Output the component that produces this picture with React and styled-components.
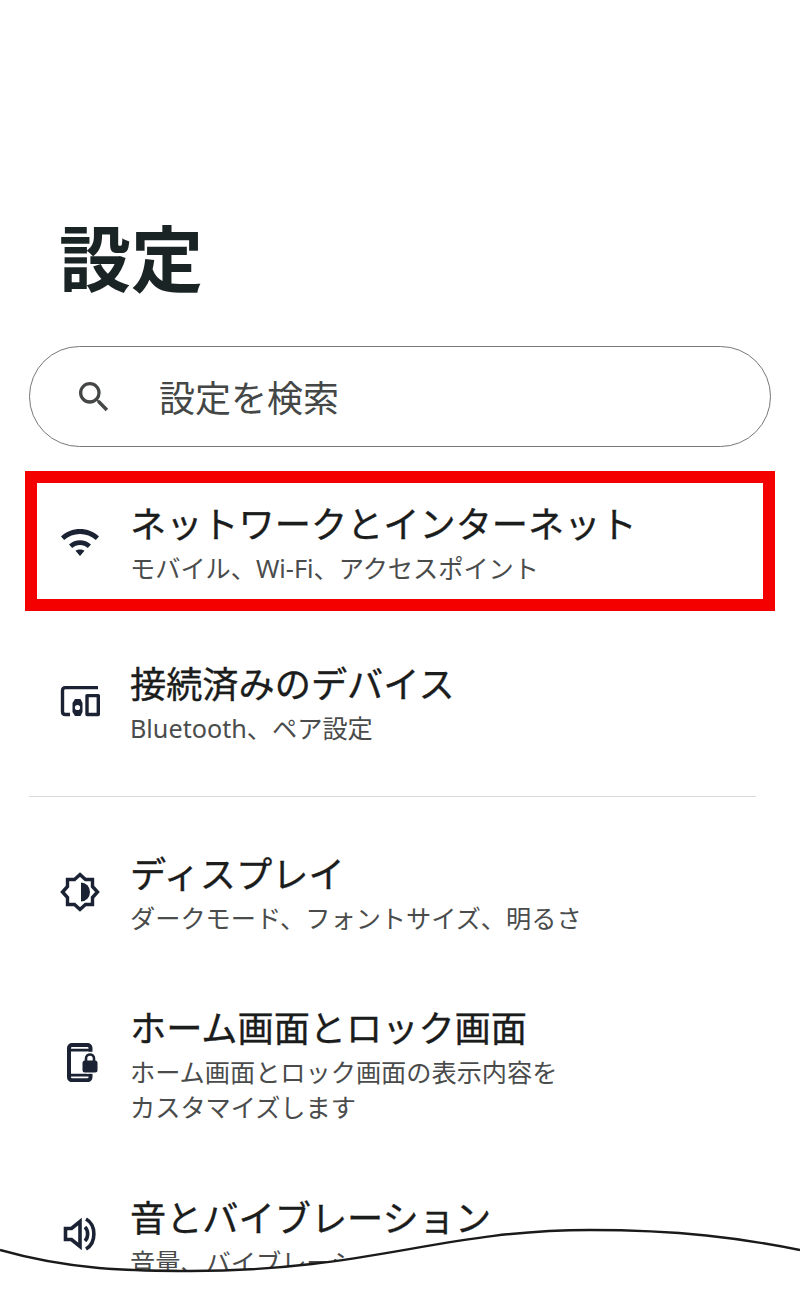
import React from "react";
import styled, { createGlobalStyle } from "styled-components";

const Global = createGlobalStyle`
  html, body { margin: 0; padding: 0; background: #fff; }
  body { width: 800px; height: 1300px; overflow: hidden; font-family: "Noto Sans", "Noto Sans CJK JP", sans-serif; }
`;

const Screen = styled.main`
  position: relative;
  width: 800px;
  height: 1300px;
  overflow: hidden;
  background: #fff;
  padding-top: 210px;
  box-sizing: border-box;
`;

const Title = styled.h1`
  margin: 0 0 0 59px;
  font-size: 72px;
  line-height: 90px;
  font-weight: 700;
  color: #1b2424;
  font-family: "Noto Sans CJK JP", sans-serif;
`;

const Search = styled.div`
  display: flex;
  align-items: center;
  box-sizing: border-box;
  width: 742px;
  height: 101px;
  margin: 46px 0 24px 29px;
  padding-left: 44px;
  border: 1.5px solid #777;
  border-radius: 51px;
`;

const SearchText = styled.span`
  margin: -2px 0 0 45px;
  font-size: 36px;
  line-height: 50px;
  color: #444746;
  font-family: "Noto Sans CJK JP", sans-serif;
`;

const Row = styled.div`
  display: flex;
  align-items: flex-start;
  box-sizing: border-box;
  height: ${(p) => p.$h}px;
  padding-top: ${(p) => p.$pt}px;
  padding-left: 60px;
`;

const BoxedRow = styled(Row)`
  width: 750px;
  margin-left: 25px;
  padding-left: 23px;
  border: 12px solid #f40000;
`;

const IconSlot = styled.div`
  flex: 0 0 40px;
  width: 40px;
  height: 40px;
  margin: ${(p) => p.$top}px 31px 0 0;
  color: #1a2233;
  svg { display: block; width: 40px; height: 40px; }
`;

const Texts = styled.div`
  display: flex;
  flex-direction: column;
  margin-left: -1px;
`;

const RowTitle = styled.div`
  font-size: 36.2px;
  font-weight: 400;
  -webkit-text-stroke: 0.35px #1b1c1c;
  line-height: 50px;
  color: #1b1c1c;
  white-space: nowrap;
`;

const RowSubs = styled.div`
  margin-top: 2px;
`;

const RowSub = styled.div`
  font-size: 25.2px;
  line-height: 35px;
  color: #4a4c4c;
  white-space: nowrap;
`;

const Divider = styled.hr`
  margin: 0 0 0 29px;
  width: 727px;
  height: 1px;
  border: 0;
  background: #d9d9d9;
`;

const WaveCover = styled.svg`
  position: absolute;
  left: 0;
  top: 1220px;
  width: 800px;
  height: 80px;
`;

const SearchIcon = () => (
  <svg width="40" height="40" viewBox="0 0 24 24" fill="#444746">
    <path d="M15.5 14h-.79l-.28-.27A6.47 6.47 0 0 0 16 9.5 6.5 6.5 0 1 0 9.5 16c1.61 0 3.09-.59 4.23-1.57l.27.28v.79l5 4.99L20.49 19l-4.99-5zm-6 0C7.01 14 5 11.99 5 9.5S7.01 5 9.5 5 14 7.01 14 9.5 11.99 14 9.5 14z" />
  </svg>
);

const WifiIcon = () => (
  <svg viewBox="0 0 40 40" fill="currentColor">
    <path d="M1 15.5 C11 5.5 29 5.5 39 15.5 L35.8 19 C27.5 11 12.5 11 4.2 19 Z" />
    <path d="M9 23.5 C15 17.8 25 17.8 31 23.5 L27.8 27 C23.5 23 16.5 23 12.2 27 Z" />
    <path d="M15.5 29.8 C18 28 22 28 24.5 29.8 L20 35 Z" />
  </svg>
);

const DevicesIcon = () => (
  <svg viewBox="0 0 40 40" fill="none" stroke="currentColor" strokeWidth="3.4">
    <path d="M38 6.6 H5.5 Q2.5 6.6 2.5 9.6 V30.5 Q2.5 33.5 5.5 33.5 H10" />
    <path d="M27 14.6 H38.3 V33.5 H27 Z" strokeLinejoin="round" />
    <path d="M15 18 H20.5 L22.5 22 V31 L20.5 35 H15 L12.5 31 V22 Z" fill="currentColor" stroke="none" />
    <circle cx="17.5" cy="26.5" r="2.6" fill="#fff" stroke="none" />
  </svg>
);

const DisplayIcon = () => (
  <svg viewBox="0 0 40 40" fill="none" stroke="currentColor" strokeWidth="3.4" strokeLinejoin="miter">
    <path d="M20 2.5 L25.5 7.5 H32.5 V14.5 L37.5 20 L32.5 25.5 V32.5 H25.5 L20 37.5 L14.5 32.5 H7.5 V25.5 L2.5 20 L7.5 14.5 V7.5 H14.5 Z" />
    <path d="M21 10.5 A9 9.5 0 0 1 21 29.5 Z" fill="currentColor" stroke="none" />
  </svg>
);

const LockPhoneIcon = () => (
  <svg viewBox="0 0 40 40" fill="none">
    <rect x="9" y="3" width="21.5" height="35.2" rx="3" stroke="currentColor" strokeWidth="4" />
    <path d="M8 8.2 H31 M8 33.2 H31" stroke="currentColor" strokeWidth="2.8" />
    <rect x="27" y="9.8" width="11" height="22" fill="#fff" />
    <rect x="22.5" y="18.5" width="15" height="12" rx="2.5" fill="currentColor" />
    <path d="M26 20 V16.5 C26 11.2 34 11.2 34 16.5 V20" stroke="currentColor" strokeWidth="2.6" />
  </svg>
);

const SoundIcon = () => (
  <svg viewBox="0 0 40 40" fill="none" stroke="currentColor" strokeWidth="3.6">
    <path d="M5.5 14.5 H11.5 L20 7.5 V32.5 L11.5 25.5 H5.5 Z" strokeLinejoin="miter" />
    <path d="M25 13 C28.5 16.5 28.5 23.5 25 27" />
    <path d="M26 5 C36.5 11 36.5 29 26 35" />
  </svg>
);

const items = [
  { boxed: true, h: 140, pt: 16, top: 22, icon: <WifiIcon />, title: "ネットワークとインターネット", sub: ["モバイル、Wi-Fi、アクセスポイント"] },
  { h: 185, pt: 48, top: 22, icon: <DevicesIcon />, title: "接続済みのデバイス", sub: ["Bluetooth、ペア設定"], divider: true },
  { h: 154, pt: 52, top: 23, icon: <DisplayIcon />, title: "ディスプレイ", sub: ["ダークモード、フォントサイズ、明るさ"] },
  { h: 190, pt: 52, top: 39, icon: <LockPhoneIcon />, title: "ホーム画面とロック画面", sub: ["ホーム画面とロック画面の表示内容を", "カスタマイズします"] },
  { h: 160, pt: 52, top: 21, icon: <SoundIcon />, title: "音とバイブレーション", sub: ["音量、バイブレーション、サイレント モード"] },
];

const Item = ({ r }) => {
  const Wrap = r.boxed ? BoxedRow : Row;
  return (
    <>
      <Wrap $h={r.h} $pt={r.pt}>
        <IconSlot $top={r.top}>{r.icon}</IconSlot>
        <Texts>
          <RowTitle>{r.title}</RowTitle>
          <RowSubs>
            {r.sub.map((s) => (
              <RowSub key={s}>{s}</RowSub>
            ))}
          </RowSubs>
        </Texts>
      </Wrap>
      {r.divider && <Divider />}
    </>
  );
};

const wave = "M0 1250 C70 1270 130 1271 190 1271 C370 1271 440 1230 590 1230 C680 1230 740 1238 800 1250";

export default function App() {
  return (
    <Screen>
      <Global />
      <Title>設定</Title>
      <Search>
        <SearchIcon />
        <SearchText>設定を検索</SearchText>
      </Search>
      {items.map((r) => (
        <Item key={r.title} r={r} />
      ))}
      <WaveCover viewBox="0 1220 800 80">
        <path d={`${wave} V1300 H0 Z`} fill="#fff" />
        <path d={wave} fill="none" stroke="#1a1a1a" strokeWidth="2.4" />
      </WaveCover>
    </Screen>
  );
}
